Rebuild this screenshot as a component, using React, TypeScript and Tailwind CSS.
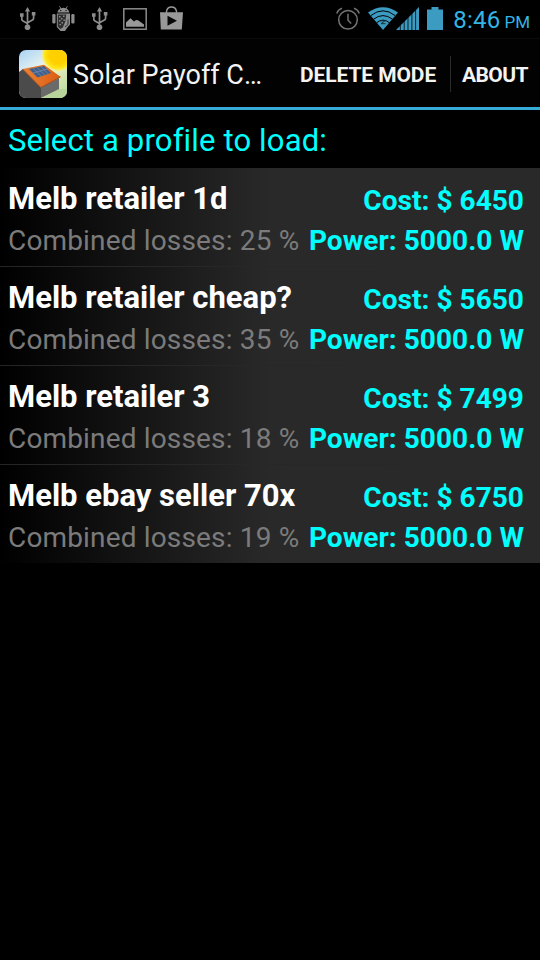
import React from "react";

interface Profile {
  name: string;
  losses: number;
  cost: number;
  power: string;
}

const profiles: Profile[] = [
  { name: "Melb retailer 1d", losses: 25, cost: 6450, power: "5000.0" },
  { name: "Melb retailer cheap?", losses: 35, cost: 5650, power: "5000.0" },
  { name: "Melb retailer 3", losses: 18, cost: 7499, power: "5000.0" },
  { name: "Melb ebay seller 70x", losses: 19, cost: 6750, power: "5000.0" },
];

const UsbIcon: React.FC = () => (
  <svg width="16" height="24" viewBox="0 0 16 24" fill="none" stroke="#8c8c8c" strokeWidth="1.7">
    <path d="M7.5 3v17M1.8 9v3.2q0 1.2 1.2 1.8l4.5 2.5M13.6 8v3.2q0 1.2-1.2 1.8l-4.9 2.8" />
    <path d="M7.5 0l2.6 4.4H4.9zM0 6.2h3.6v3.6H0zM11.8 5h3.6v3.6h-3.6z" fill="#8c8c8c" stroke="none" />
    <circle cx="7.5" cy="20.3" r="2.8" fill="#8c8c8c" stroke="none" />
  </svg>
);

const AndroidIcon: React.FC = () => (
  <svg width="23" height="26" viewBox="0 0 23 26" fill="#8c8c8c">
    <path d="M5.4 6.6C5.8 4.4 7.2 3.2 8.4 2.6L7.2.5l.6-.4L9.1 2.2q2.3-.7 4.7 0L15.1.1l.6.4-1.2 2.1c1.3.7 2.5 2 2.9 4z" />
    <path d="M4.8 7.6h13.2v11l-3 3.500-2 3H8.500L4.800 21z" />
    <rect x="0.3" y="8" width="3.2" height="9.5" rx="1.3" />
    <rect x="19.3" y="8" width="3.2" height="9.5" rx="1.3" />
    <path d="M5.8 8.5h8.500l-1 7-2.500 6-2.500 1.500-2.500-2.500z" fill="#2e2e2e" />
    <path d="M7 10h1.5v1.5H7zM11 9.5h1.5V11H11zM9 12h1.5v1.5H9zM11.500 13.500h1.300v1.500h-1.300zM7 14h1.5v1.500H7zM9.500 16h1.500v1.500H9.500zM7.500 18H9v1.300H7.500z" />
    <path d="M16 13.5v5l-3 2.500" fill="none" stroke="#1c1c1c" strokeWidth="0.8" />
    <circle cx="8.8" cy="4.6" r="0.7" fill="#000" />
    <circle cx="14" cy="4.6" r="0.7" fill="#000" />
  </svg>
);

const PictureIcon: React.FC = () => (
  <svg width="24" height="22" viewBox="0 0 24 22">
    <rect x="0.8" y="0.8" width="22.4" height="20.4" fill="none" stroke="#8c8c8c" strokeWidth="1.5" />
    <path d="M3 18.8v-4.3l4.5-4.2 3.5 3.2 2-1.5 2 .2 6 4.300v2.300z" fill="#999" />
  </svg>
);

const PlayStoreIcon: React.FC = () => (
  <svg width="23" height="24" viewBox="0 0 23 24">
    <path d="M6.5 7V5.5Q7.2 1 11.5 1T16.5 5.500V7" fill="none" stroke="#999" strokeWidth="1.4" />
    <path d="M0 6.3h23L21.8 23.5H.8z" fill="#999" />
    <path d="M7.5 9.7l9.5 5-9.5 5z" fill="#080808" />
  </svg>
);

const AlarmIcon: React.FC = () => (
  <svg width="24" height="24" viewBox="0 0 24 24" fill="none" stroke="#737373" strokeWidth="1.5">
    <circle cx="12" cy="12.8" r="9.3" />
    <path d="M12 6.8v6.5l3.2 3.2M.8 6.5Q2 2.5 6 1.2M23.2 6.5Q22 2.5 18 1.2" />
  </svg>
);

const WifiIcon: React.FC = () => (
  <svg width="30" height="23" viewBox="0 0 30 23">
    <path d="M0 5.5Q15-5 30 5.5L15 23z" fill="#3b9bc1" />
    <path d="M2.8 8.6Q15-1 27.2 8.6M5.5 12.2Q15 5 24.5 12.2M8.5 15.8Q15 10.5 21.5 15.8" fill="none" stroke="#000" strokeWidth="1" />
    <path d="M12.5 13.7h4.5l-4 3h4.5" fill="none" stroke="#12303c" strokeWidth="1" />
  </svg>
);

const SignalIcon: React.FC = () => (
  <svg width="23" height="23" viewBox="0 0 23 23" fill="#3b9bc1">
    <path d="M0 23L23 0v23z" />
    <path d="M4.300 16v7M8.200 12v11M12 8v15M15.900 4v19M19.600 1v22" fill="none" stroke="#000" strokeWidth="0.8" />
  </svg>
);

const BatteryIcon: React.FC = () => (
  <svg width="16" height="23" viewBox="0 0 16 23" fill="#3b9bc1">
    <path d="M4.5 0h7v2.5H16V23H0V2.5h4.5z" />
  </svg>
);

const AppIcon: React.FC = () => (
  <svg width="48" height="48" viewBox="0 0 48 48">
    <defs>
      <clipPath id="tile">
        <rect width="48" height="48" rx="7" />
      </clipPath>
      <linearGradient id="sky" x1="0" y1="0" x2="0.6" y2="1">
        <stop offset="0" stopColor="#a9d3f5" />
        <stop offset="0.5" stopColor="#eef6ef" />
        <stop offset="0.75" stopColor="#dbe8b4" />
        <stop offset="1" stopColor="#c5dda6" />
      </linearGradient>
      <radialGradient id="sun">
        <stop offset="0.5" stopColor="#ffd000" />
        <stop offset="0.78" stopColor="#ffe61c" />
        <stop offset="1" stopColor="#fff48a" stopOpacity="0" />
      </radialGradient>
      <linearGradient id="roof" x1="0" y1="0" x2="1" y2="0">
        <stop offset="0" stopColor="#e78336" />
        <stop offset="1" stopColor="#dc5c12" />
      </linearGradient>
    </defs>
    <g clipPath="url(#tile)">
      <rect width="48" height="48" fill="url(#sky)" />
      <circle cx="39" cy="5" r="17.5" fill="url(#sun)" />
      <path d="M0 22l4-3 18 18.500V48H0z" fill="#4b4b4b" />
      <path d="M22 37l18-9v12L22 48z" fill="#6a6a6a" />
      <path d="M22 48l18-9h8v9z" fill="#b9d49b" />
      <path d="M3.5 19L25 14.8l16.500 12L22 37.500z" fill="url(#roof)" />
      <path d="M3.5 19L22 37.5l19.5-10.700" fill="none" stroke="#a64a1a" strokeWidth="1" />
      <path d="M10 19l15-3 7 7-13.500 4.500z" fill="#40608b" />
      <path d="M14 18.2l8.300 7.900M18 17.400l7.500 7.500M22 16.600l7 7M14 23l14.500-4" fill="none" stroke="#91a5bd" strokeWidth="0.5" />
    </g>
  </svg>
);

const StatusBar: React.FC = () => (
  <div className="flex h-[38px] items-start justify-between bg-black">
    <div className="flex items-start pl-5">
      <div className="mt-[7px] w-8">
        <UsbIcon />
      </div>
      <div className="mt-[6px] w-10">
        <AndroidIcon />
      </div>
      <div className="mt-[7px] w-[31px]">
        <UsbIcon />
      </div>
      <div className="mt-2 w-9">
        <PictureIcon />
      </div>
      <div className="mt-[6px] pl-px">
        <PlayStoreIcon />
      </div>
    </div>
    <div className="flex items-start pr-[10px]">
      <div className="mt-[7px] w-8">
        <AlarmIcon />
      </div>
      <div className="mt-[7px] w-7">
        <WifiIcon />
      </div>
      <div className="mt-[7px] w-[31px]">
        <SignalIcon />
      </div>
      <div className="mt-[7px] w-[26px]">
        <BatteryIcon />
      </div>
      <div className="flex items-baseline text-[#33b5e5]">
        <span className="text-[24px] leading-10 tracking-[0.2px]">8:46</span>
        <span className="ml-[4px] text-[17px]">PM</span>
      </div>
    </div>
  </div>
);

const ActionBar: React.FC = () => (
  <header className="flex h-[72px] items-center border-t border-b-3 border-t-[#0b0b0b] border-b-[#38acd8] bg-[#020202] pl-[19px] text-[#f3f3f3]">
    <div className="mt-[1px]">
      <AppIcon />
    </div>
    <h1 className="mt-1 ml-[6px] w-[214px] whitespace-nowrap text-[27px]">Solar Payoff C…</h1>
    <button className="mt-[5px] w-[163px] whitespace-nowrap pl-[13px] text-left text-[21px] font-bold tracking-[-0.1px]">
      DELETE MODE
    </button>
    <span className="mt-[1px] h-9 w-px bg-[#2b2b2b]" />
    <button className="mt-[5px] pl-[11px] text-[21px] font-bold tracking-[-0.6px]">ABOUT</button>
  </header>
);

const ProfileRow: React.FC<{ profile: Profile }> = ({ profile }) => (
  <li className="group bg-linear-to-r/srgb from-black to-[#292929] to-50%">
    <div className="flex h-[98px] justify-between pl-2 pr-4">
      <div className="whitespace-nowrap">
        <p className="mt-[13px] text-[31px] leading-9 font-bold text-white">{profile.name}</p>
        <p className="mt-[6px] text-[28px] leading-9 tracking-[0.16px] text-[#7b7b7b]">
          Combined losses: {profile.losses} %
        </p>
      </div>
      <div className="whitespace-nowrap text-right text-[28px] leading-9 font-bold tracking-[0.05px] text-[#00ffff]">
        <p className="mt-[15px]">Cost: $ {profile.cost}</p>
        <p className="mt-1">Power: {profile.power} W</p>
      </div>
    </div>
    <div className="h-px bg-linear-to-r from-[#252525] to-[#292929] group-last:hidden" />
  </li>
);

const App: React.FC = () => {
  return (
    <div className="min-h-screen w-[540px] bg-black font-['Roboto',sans-serif]">
      <StatusBar />
      <ActionBar />
      <main>
        <h2 className="h-[58px] pl-2 pt-[13px] text-[31px] leading-9 tracking-[0.16px] text-[#00ffff]">
          Select a profile to load:
        </h2>
        <ul>
          {profiles.map((profile) => (
            <ProfileRow key={profile.name} profile={profile} />
          ))}
        </ul>
      </main>
    </div>
  );
};

export default App;
